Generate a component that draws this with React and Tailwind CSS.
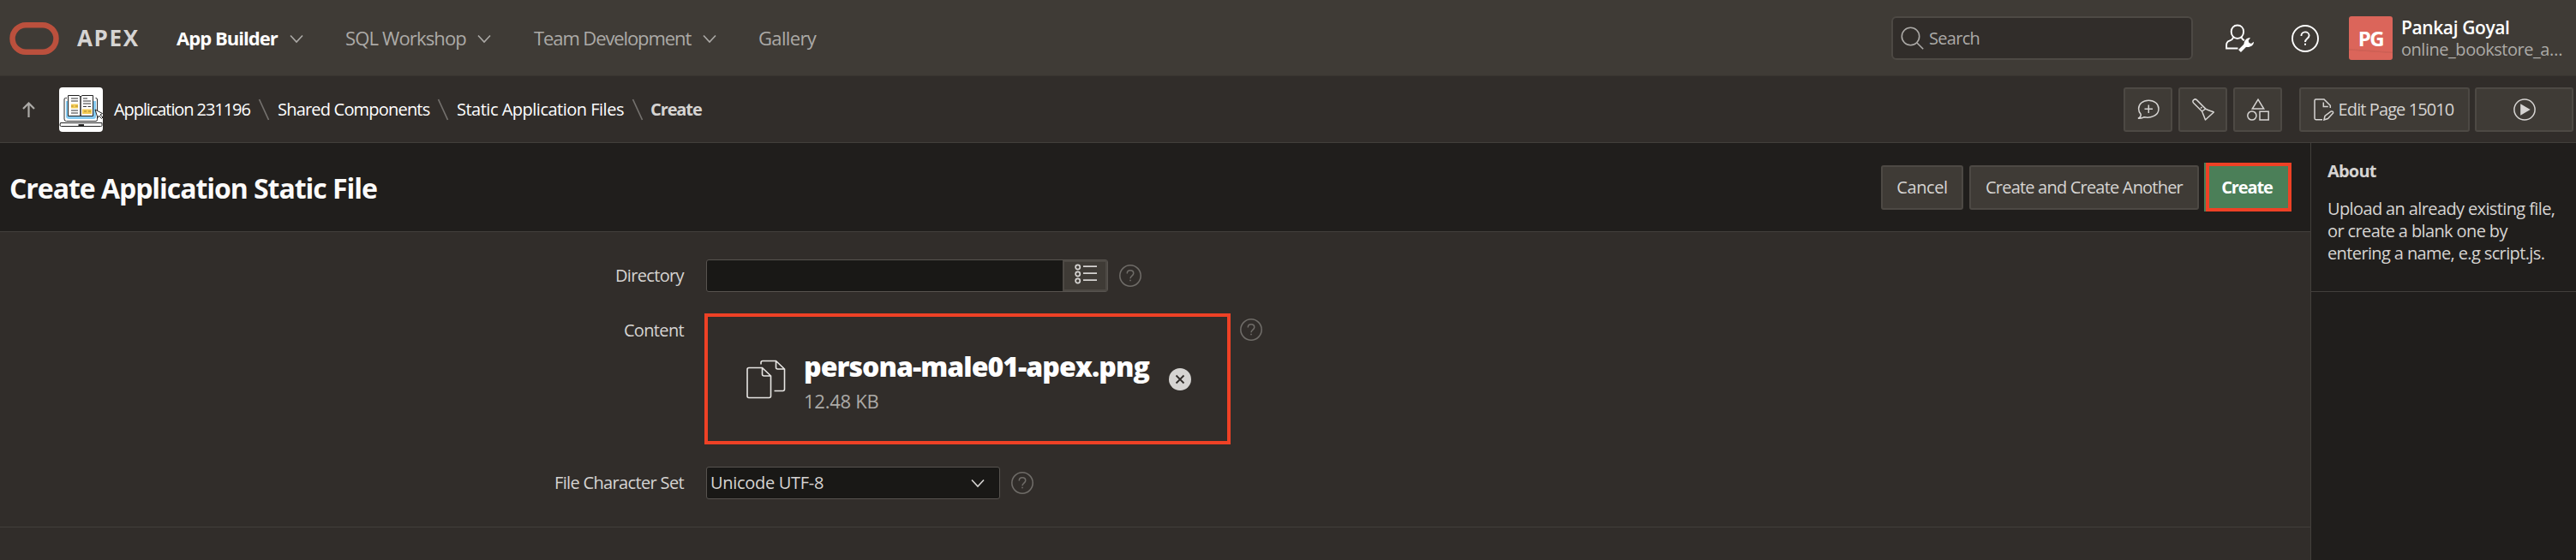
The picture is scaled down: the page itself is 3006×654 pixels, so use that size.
import React from "react";

const Chevron = ({ className = "" }) => (
  <svg className={`h-4 w-4 shrink-0 ${className}`} viewBox="0 0 16 16" fill="none" stroke="currentColor" strokeWidth="1.6">
    <path d="M1 4.5 8 12l7-7.500" />
  </svg>
);

const Help = ({ className = "" }) => (
  <svg className={`shrink-0 ${className}`} viewBox="0 0 32 32" fill="none" stroke="currentColor" strokeWidth="1.9">
    <circle cx="16" cy="16" r="15" />
    <path d="M11.400 12.900c0-2.700 2-4.500 4.600-4.500s4.600 1.800 4.600 4.200c0 3.300-4.600 3.700-4.600 7.400" />
    <path d="M15 22.700h2" strokeWidth="2" />
  </svg>
);

const NavItem = ({ label, width, active, menu = true }) => (
  <div className={`flex items-center ${active ? "font-bold text-white" : "text-[#acaaa7]"}`}>
    <span className={`shrink-0 text-[22px] whitespace-nowrap ${width}`}>{label}</span>
    {menu && <Chevron className="text-[#acaaa7]" />}
  </div>
);

const Slash = () => (
  <svg className="h-[26px] w-[14px] shrink-0" viewBox="0 0 14 26" fill="none" stroke="#74716e" strokeWidth="1.7">
    <path d="M1.500 1l11 24" />
  </svg>
);

const BookLogo = () => (
  <svg className="h-[52px] w-[51px] shrink-0 rounded" viewBox="0 0 51 52" fill="none">
    <rect width="51" height="52" fill="#fff" />
    <path d="M8 16h35v18q0 3-3 3H12q-4 0-4-3Z" fill="#86caf0" />
    <path d="M9 12.500H7.500Q6 12.500 6 14v23q0 2.500 2.500 2.500H43q1.500 0 1.500-2V14q0-1.500-2-1.500" stroke="#2a2a2a" strokeWidth="1" />
    <path d="M10.500 9.500H23l2 1.500 2-1.500h12.500v24h-29Z" fill="#fff" stroke="#222" strokeWidth="1" />
    <path d="M25 11v22" stroke="#222" strokeWidth="1.500" />
    <path d="M14 19.500h8v5h-8zM27 25.500h11v5.500H27z" fill="#f3cb55" />
    <path d="M14 13h8M14 16h8M14 27h8M14 30h8M28 13h5M28 16h9M28 19h9M28 22.500h4M33.500 22.500h3.500" stroke="#333" strokeWidth="1" />
    <path d="M14 22h2.500M19 22h3M29 28h3M34 28h3" stroke="#a88a35" strokeWidth="1" />
    <path d="M1.500 41.500h48.500v3q0 1-1.500 1h-46q-1.500 0-1.500-1.500Z" fill="#fff" stroke="#222" strokeWidth="1" />
    <path d="M22.500 44h6.500" stroke="#222" strokeWidth="2" />
    <path d="M42 26l3 9.500 1.500-2.500 3 3.500 1.500-1.500-3-3 2.500-1.500Z" fill="#fff" stroke="#222" strokeWidth="1" />
  </svg>
);

const boxed = "flex h-[52px] shrink-0 items-center justify-center rounded-[3px] border-2 border-[#4d4944] bg-[#3f3b36] text-[#d6d4d2]";

const ToolButton = ({ className = "w-[57px]", children }) => <button className={`${boxed} ${className}`}>{children}</button>;

const toolIcon = { className: "h-[26px] w-[26px] shrink-0", viewBox: "0 0 26 26", fill: "none", stroke: "currentColor", strokeWidth: 1.5 };

const Label = ({ children }) => <div className="w-[798px] shrink-0 text-right text-[20px] leading-[38px] tracking-[-0.65px]">{children}</div>;

export default function App() {
  return (
    <div className="flex h-[654px] w-[3006px] flex-col overflow-hidden bg-[#312d2a] font-['Open_Sans',sans-serif] text-[#d6d4d2]">
      <header className="flex h-[89px] shrink-0 items-center border-b border-[#383430] bg-[#3f3b36] pt-px">
        <div className="flex w-[206px] shrink-0 items-center pl-[11px]">
          <svg className="h-[38px] w-[58px]" viewBox="0 0 58 38" fill="none">
            <rect x="3.500" y="3.250" width="51" height="31.500" rx="15.750" stroke="#bb503d" strokeWidth="6.500" />
          </svg>
          <span className="pl-[21px] text-[26px] font-bold tracking-[1.6px] text-[#d6d4d2]">APEX</span>
        </div>
        <nav className="flex">
          <div className="w-[197px] tracking-[-0.95px]"><NavItem label="App Builder" width="w-[132px]" active /></div>
          <div className="w-[220px] tracking-[-0.85px]"><NavItem label="SQL Workshop" width="w-[154px]" /></div>
          <div className="w-[262px] tracking-[-1.1px]"><NavItem label="Team Development" width="w-[197px]" /></div>
          <div className="tracking-[-0.65px]"><NavItem label="Gallery" width="w-auto" menu={false} /></div>
        </nav>
        <div className="ml-auto flex w-[799px] items-center">
          <div className="flex h-[51px] w-[352px] items-center rounded-md border-2 border-[#4d4944] bg-[#312d2a] pl-[9px] text-[#acaaa7]">
            <svg className="h-[27px] w-[27px] shrink-0" viewBox="0 0 27 27" fill="none" stroke="currentColor" strokeWidth="1.6">
              <circle cx="11.500" cy="11.500" r="10.200" />
              <path d="M18.700 18.700l7.500 7.500" />
            </svg>
            <span className="pt-px pl-[6px] text-[20px] tracking-[-0.7px]">Search</span>
          </div>
          <svg className="ml-[37px] h-[34px] w-[34px] shrink-0" viewBox="0 0 34 34" fill="none" stroke="#fff" strokeWidth="1.900">
            <path d="M14.900 1.500c4.200 0 7.200 3 7.200 7.500 0 4.300-2.900 8-7.200 8s-7.200-3.700-7.200-8c0-4.500 3-7.500 7.200-7.500Z" />
            <path d="M10 15.500c-.3 2.300-1.700 3.300-4.300 4.100-2.500.8-3.600 2.400-3.600 4.900v4h13.400M19.800 15.500c.3 1.300.8 2.100 1.800 2.900l1.400.7" />
            <path d="M17.500 31.500l9-9" strokeWidth="4" />
            <path d="M22.600 24.500c-.4-4.700 2.400-8.300 7.400-8.600l-2.300 3.700.8 2.500 2.500.8 3-2.100c0 4.400-4.300 6.800-8.500 6.200Z" fill="#fff" stroke="none" />
          </svg>
          <Help className="ml-[44px] h-8 w-8 text-white" />
          <div className="ml-[35px] flex h-[51px] w-[51px] shrink-0 items-center justify-center rounded-[3px] bg-[#db655a] bg-[linear-gradient(4deg,transparent_20%,#cf6055_21%,#cf6055_23%,transparent_25%)] text-[24px] font-bold tracking-[-1.5px] text-white">PG</div>
          <div className="flex flex-col pt-px pl-[10px] leading-[25px]">
            <span className="text-[21px] font-semibold tracking-[-0.4px] text-white">Pankaj Goyal</span>
            <span className="text-[20px] tracking-[-0.47px] text-[#acaaa7]">online_bookstore_a…</span>
          </div>
        </div>
      </header>

      <div className="flex h-[78px] shrink-0 items-center border-b border-[#423f3b]">
        <svg className="ml-[26px] h-[18px] w-[15px] shrink-0" viewBox="0 0 15 18" fill="none" stroke="#acaaa7" strokeWidth="2.200">
          <path d="M7.500 18V1.500M1 8l6.500-6.500L14 8" />
        </svg>
        <div className="ml-[28px]"><BookLogo /></div>
        <div className="flex items-center pl-[13px] text-[20px] font-medium text-white">
          <span className="w-[168px] shrink-0 tracking-[-1.08px] whitespace-nowrap">Application 231196</span><Slash />
          <span className="ml-[9px] w-[186px] shrink-0 tracking-[-0.8px] whitespace-nowrap">Shared Components</span><Slash />
          <span className="ml-[9px] w-[204px] shrink-0 tracking-[-0.5px] whitespace-nowrap">Static Application Files</span><Slash />
          <span className="ml-[8px] font-bold tracking-[-1.1px] text-[#d6d4d2]">Create</span>
        </div>
        <div className="ml-auto flex pr-[3px]">
          <div className="flex gap-[7px]">
            <ToolButton>
              <svg {...toolIcon}>
                <path d="M13.300 2.200C6.500 2.200 1.600 6.300 1.600 12c0 3.300 1.300 5 2.600 6.500.3 2-.7 3.700-3.200 4.700 3.300.3 5.500-.3 7.200-1.500 6.400 1.500 16.800-1 16.800-9.700 0-5.700-4.900-9.800-11.700-9.800ZM13.300 7.500v9.500M8.500 12.200H18" />
              </svg>
            </ToolButton>
            <ToolButton>
              <svg {...toolIcon}>
                <path d="M11.500 15L1.700 5.200Q0 3.200 1.900 1.700 3.600 0 5.600 1.900L15.800 12.100ZM11.500 15c1.500 3 2.500 6.500 4 10L25.300 16c-3-1.500-6.500-2-9.500-3.900Z" strokeLinejoin="round" />
                <path d="M10.300 10.300l1 1" strokeWidth="2" />
              </svg>
            </ToolButton>
            <ToolButton>
              <svg {...toolIcon}>
                <path d="M13 1.200L19.700 12H6.300ZM15 15.200h10.200v9.800H15z" />
                <circle cx="5.900" cy="20" r="5.100" />
              </svg>
            </ToolButton>
          </div>
          <ToolButton className="ml-5 w-[199px]">
            <svg className="h-[26px] w-[24px] shrink-0" viewBox="0 0 24 26" fill="none" stroke="currentColor" strokeWidth="1.500">
              <path d="M10 24.700H2.500Q1 24.700 1 23V2.500Q1 1 2.500 1H12l7.300 7.300V11M11.300 4.500v5h5.500" />
              <path d="M12 25l1-4.500 7.300-5.500q2.500-.5 2.300 2L16.500 23.500Z" />
            </svg>
            <span className="pr-[2px] pl-[5px] text-[20px] tracking-[-0.9px]">Edit Page 15010</span>
          </ToolButton>
          <ToolButton className="ml-1.5 w-[115px]">
            <svg {...toolIcon}>
              <circle cx="13" cy="13" r="12.100" />
              <path d="M8.200 6.200L19.700 13 8.200 19.800Z" fill="currentColor" stroke="none" />
            </svg>
          </ToolButton>
        </div>
      </div>

      <div className="flex min-h-0 flex-1">
        <main className="flex w-[2697px] shrink-0 flex-col border-r border-[#423f3b]">
          <div className="flex h-[104px] shrink-0 items-center border-b border-[#423f3b] bg-[#201e1c] pl-[10px]">
            <h1 className="pt-[2px] pl-px text-[32px] font-bold tracking-[-1.05px] text-[#fcfbfa]">Create Application Static File</h1>
            <div className="ml-auto flex items-center pr-[22px] text-[20px]">
              <button className={`${boxed} w-[96px] tracking-[-0.4px]`}>Cancel</button>
              <button className={`${boxed} ml-[7px] w-[268px] tracking-[-0.8px]`}>Create and Create Another</button>
              <div className="ml-[6px] bg-[#4b7f58] pl-[2px]">
                <button className="flex h-[57px] w-[100px] items-center justify-center border-4 border-[#ee4125] bg-[#4b7f58] pr-[4px] font-bold tracking-[-1.1px] text-white">Create</button>
              </div>
            </div>
          </div>
          <form className="h-[345px] shrink-0 border-b border-[#423f3b] pt-8">
            <div className="flex h-[38px] items-center">
              <Label>Directory</Label>
              <div className="ml-[26px] flex h-[38px] w-[469px] rounded-[3px] border border-[#57534f] bg-[#191816]">
                <div className="flex-1" />
                <div className="flex w-[52px] items-center justify-center border-2 border-[#4d4944] bg-[#3f3b36] pl-[2px]">
                  <svg className="mb-1 h-[24px] w-[26px]" viewBox="0 0 26 24" fill="none" stroke="#d6d4d2" strokeWidth="1.700">
                    <circle cx="3.700" cy="4" r="2.600" /><circle cx="3.700" cy="12" r="2.600" /><circle cx="3.700" cy="20" r="2.600" />
                    <path d="M10 3.200h16M10 11.200h16M10 19.200h16" />
                  </svg>
                </div>
              </div>
              <Help className="ml-[13px] h-[26px] w-[26px] text-[#6f6c68]" />
            </div>
            <div className="mt-[25px] flex h-[153px] items-start">
              <div className="pt-px"><Label>Content</Label></div>
              <div className="ml-6 flex h-[153px] w-[614px] items-center border-4 border-[#ee4125] pl-[45px]">
                <svg className="h-[46px] w-[46px] shrink-0" viewBox="0 0 46 46" fill="none" stroke="#e8e6e4" strokeWidth="1.600">
                  <path d="M3 9.500h15.500L28.500 19v23.500q0 2-2 2H3q-2 0-2-2v-31q0-2 2-2ZM18.500 9.500V17q0 2 2 2h8" />
                  <path d="M17 5.500V3.500q0-2 2-2h15.500l10 9.500v23.500q0 2-2 2H32.500M34.500 1.500V9q0 2 2 2h8" />
                </svg>
                <div className="flex w-[415px] flex-col pt-[8px] pl-[21px]">
                  <span className="text-[32px] leading-[42px] font-extrabold tracking-[-0.95px] whitespace-nowrap text-white">persona-male01-apex.png</span>
                  <span className="text-[22px] leading-[38px] tracking-[-0.25px] text-[#acaaa7]">12.48 KB</span>
                </div>
                <svg className="ml-8 h-[26px] w-[26px] shrink-0" viewBox="0 0 26 26">
                  <circle cx="13" cy="13" r="13" fill="#d6d4d2" />
                  <path d="M8.500 8.500l9 9M17.500 8.500l-9 9" stroke="#312d2a" strokeWidth="1.800" />
                </svg>
              </div>
              <Help className="mt-[6px] ml-[11px] h-[26px] w-[26px] text-[#6f6c68]" />
            </div>
            <div className="mt-[26px] flex h-[38px] items-center">
              <Label>File Character Set</Label>
              <div className="ml-[26px] flex h-[38px] w-[343px] items-center justify-between rounded-[3px] border border-[#57534f] bg-[#191816] pr-[17px] pl-[4px] text-[20px] tracking-[-0.3px]">
                Unicode UTF-8
                <Chevron />
              </div>
              <Help className="ml-[13px] h-[26px] w-[26px] text-[#6f6c68]" />
            </div>
          </form>
        </main>
        <aside className="flex-1 bg-[#201e1c]">
          <div className="h-[174px] border-b border-[#423f3b] pt-[20px] pl-[19px] text-[20px] leading-[26px]">
            <h2 className="font-bold tracking-[-0.8px]">About</h2>
            <p className="pt-[18px] tracking-[-0.62px] whitespace-pre">{"Upload an already existing file,\nor create a blank one by\nentering a name, e.g script.js."}</p>
          </div>
        </aside>
      </div>
    </div>
  );
}
